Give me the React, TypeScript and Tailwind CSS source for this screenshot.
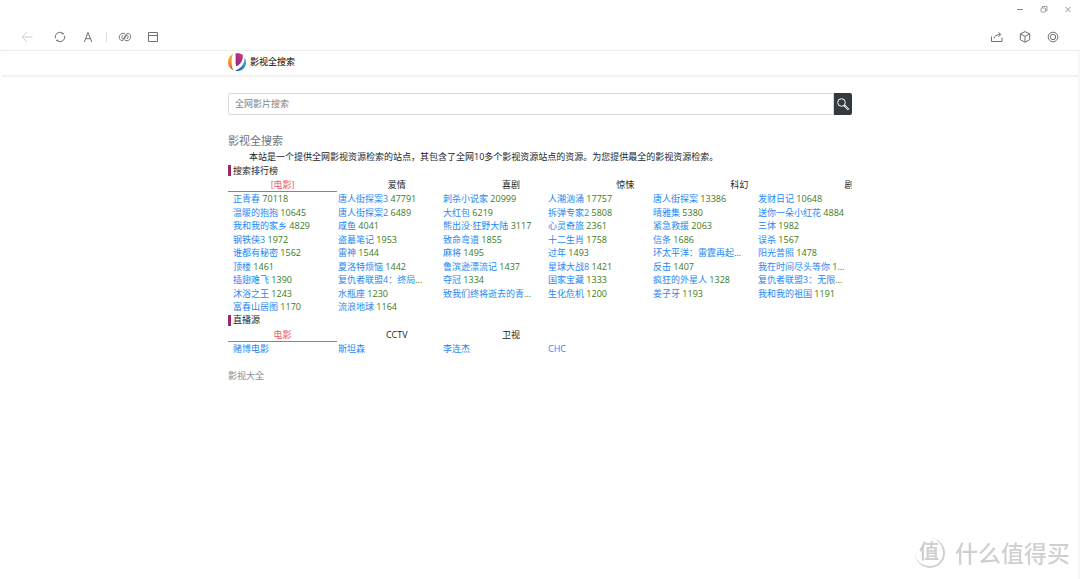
import React from "react";

type Film = [string, number];

const films: Film[] = [
  ["正青春", 70118], ["唐人街探案3", 47791], ["刺杀小说家", 20999], ["人潮汹涌", 17757], ["唐人街探案", 13386], ["发财日记", 10648],
  ["温暖的抱抱", 10645], ["唐人街探案2", 6489], ["大红包", 6219], ["拆弹专家2", 5808], ["晴雅集", 5380], ["送你一朵小红花", 4884],
  ["我和我的家乡", 4829], ["咸鱼", 4041], ["熊出没·狂野大陆", 3117], ["心灵奇旅", 2361], ["紧急救援", 2063], ["三体", 1982],
  ["钢铁侠3", 1972], ["盗墓笔记", 1953], ["致命弯道", 1855], ["十二生肖", 1758], ["信条", 1686], ["误杀", 1567],
  ["谁都有秘密", 1562], ["雷神", 1544], ["麻将", 1495], ["过年", 1493], ["环太平洋：雷霆再起", 1480], ["阳光普照", 1478],
  ["顶楼", 1461], ["夏洛特烦恼", 1442], ["鲁滨逊漂流记", 1437], ["星球大战8", 1421], ["反击", 1407], ["我在时间尽头等你", 1400],
  ["插翅难飞", 1390], ["复仇者联盟4：终局之战", 1380], ["夺冠", 1334], ["国家宝藏", 1333], ["疯狂的外星人", 1328], ["复仇者联盟3：无限战争", 1300],
  ["沐浴之王", 1243], ["水瓶座", 1230], ["致我们终将逝去的青春", 1210], ["生化危机", 1200], ["姜子牙", 1193], ["我和我的祖国", 1191],
  ["富春山居图", 1170], ["流浪地球", 1164],
];

const channels = ["赌博电影", "斯坦森", "李连杰", "CHC"];

function IconButton({ label, className = "", children }: { label: string; className?: string; children: React.ReactNode }) {
  return (
    <button type="button" aria-label={label} className={`flex items-center justify-center ${className}`}>
      {children}
    </button>
  );
}

function WindowBar() {
  return (
    <div className="flex h-5 items-center justify-end gap-3 pr-1.5 pb-0.5 text-[#888]">
      <IconButton label="最小化" className="size-3">
        <svg className="size-3" viewBox="0 0 12 12" fill="none" stroke="currentColor"><path d="M3 6.5h6" /></svg>
      </IconButton>
      <IconButton label="还原" className="size-3">
        <svg className="size-3" viewBox="0 0 12 12" fill="none" stroke="currentColor" strokeWidth=".8"><rect x="3" y="5" width="4.5" height="4" rx=".6" /><path d="M4.5 5V3.4H9v4.2H7.5" /></svg>
      </IconButton>
      <IconButton label="关闭" className="size-3">
        <svg className="size-3" viewBox="0 0 12 12" fill="none" stroke="currentColor" strokeWidth=".9"><path d="M3.5 4l5 5M8.5 4l-5 5" /></svg>
      </IconButton>
    </div>
  );
}

function Toolbar() {
  return (
    <div className="flex h-[31px] items-center justify-between border-b border-[#ececec] pt-1 pr-[19px] pl-5 text-[#707070]">
      <div className="flex items-center">
        <IconButton label="后退" className="size-4 text-[#d0d0d0]">
          <svg className="size-4" viewBox="0 0 16 16" fill="none" stroke="currentColor"><path d="M2 8h10.5M7 3L2 8l5 5" /></svg>
        </IconButton>
        <IconButton label="刷新" className="ml-4 size-4">
          <svg className="size-4" viewBox="0 0 16 16" fill="none" stroke="currentColor"><path d="M3.4 9.2A4.7 4.7 0 0 1 10.6 4.1M12.6 6.8A4.7 4.7 0 0 1 5.4 11.900" /><path d="M9.600 4.600h2.200M4.200 11.400h2.200" strokeWidth="1.400" /></svg>
        </IconButton>
        <IconButton label="字体" className="ml-3 size-4">
          <svg className="size-4" viewBox="0 0 16 16" fill="none" stroke="currentColor"><path d="M4.300 13L8 3.500 11.800 13M5.500 9.700h5" /></svg>
        </IconButton>
        <span className="ml-2.5 h-2.5 w-px bg-[#ddd]" />
        <IconButton label="链接" className="ml-2.5 size-4">
          <svg className="size-4" viewBox="0 0 16 16" fill="none" stroke="currentColor" strokeLinecap="round"><path d="M7.700 4.700C5.400 3.300 2.300 5.300 2.300 8.300c0 3.500 3.700 4.300 5.100 1.700l1.500-3c.6-1.100 1.900-1.100 2.200 0 .2.900-.3 1.600-.9 2.600" /><path d="M8.300 11.300c2.300 1.400 5.400-.6 5.400-3.600 0-3.500-3.700-4.300-5.100-1.700L7.100 9c-.6 1.100-1.900 1.100-2.200 0-.2-.9.300-1.600.9-2.600" /></svg>
        </IconButton>
        <IconButton label="窗口" className="ml-3 size-4">
          <svg className="size-4" viewBox="0 0 16 16" fill="none" stroke="currentColor"><path d="M3.5 3.5h9v9h-9zM3.5 6.5h9" /></svg>
        </IconButton>
      </div>
      <div className="flex items-center gap-3">
        <IconButton label="分享" className="size-4">
          <svg className="size-4" viewBox="0 0 16 16" fill="none" stroke="currentColor"><path d="M2.5 7.500v5h10.500v-4M5 9.500c.5-2.500 2.500-4 6.500-4M9.500 3.200l2.300 2.300-2.300 2.300" /></svg>
        </IconButton>
        <IconButton label="扩展" className="size-4">
          <svg className="size-4" viewBox="0 0 16 16" fill="none" stroke="currentColor"><path d="M8 2.600l4.700 2.300v5.800L8 13.200 3.300 10.700V4.900zM3.300 4.900L8 7.400l4.700-2.500M8 7.400v5.800" /></svg>
        </IconButton>
        <IconButton label="设置" className="size-4">
          <svg className="size-4" viewBox="0 0 16 16" fill="none" stroke="currentColor"><circle cx="8" cy="8" r="4.800" /><circle cx="8" cy="8" r="2.700" /></svg>
        </IconButton>
      </div>
    </div>
  );
}

function Logo() {
  return (
    <svg className="size-[18px]" viewBox="0 0 18 18" aria-hidden="true">
      <defs>
        <linearGradient id="warm" x1="0" y1="0" x2="0.4" y2="1"><stop offset="0" stopColor="#f8d024" /><stop offset="1" stopColor="#ea5a27" /></linearGradient>
        <linearGradient id="cool" x1="1" y1="0" x2="0" y2="1"><stop offset="0" stopColor="#37c3c4" /><stop offset="1" stopColor="#2358a5" /></linearGradient>
        <linearGradient id="pink" x1="1" y1="0" x2="0" y2="1"><stop offset="0" stopColor="#e0307c" /><stop offset="1" stopColor="#7d2c8c" /></linearGradient>
      </defs>
      <path d="M5 1C1.800 2.500 0 5.500 0 9c0 3.800 2.200 6.900 5.500 8.300C3.300 14 2.700 5.500 5 1z" fill="url(#warm)" />
      <path d="M7.500 .4c2.700-.6 5.300 0 7.400 1.600 .2 5.500-2.400 9.700-6.200 11.200C7 13 7.900 5 7.500 .4z" fill="url(#pink)" />
      <path d="M16.700 4.600c2.400 4.200 1.500 9-2 11.700-2.300 1.700-5.200 2.100-7.700 1.400C13 15.500 16.400 11 16.700 4.600z" fill="url(#cool)" />
    </svg>
  );
}

function SectionTitle({ children }: { children: React.ReactNode }) {
  return <h2 className="flex h-[13px] items-center gap-0.5 before:h-[11px] before:w-[3px] before:bg-[#9b2764]">{children}</h2>;
}

function Tabs({ items }: { items: string[] }) {
  return (
    <div role="tablist" className="flex gap-[5px] overflow-hidden">
      {items.map((t, i) => (
        <button
          key={t}
          type="button"
          role="tab"
          aria-selected={i === 0}
          className="h-[15px] w-[17.5%] shrink-0 leading-[13px] aria-selected:text-[#ef5568] aria-selected:shadow-[inset_0_-1px_0_#ef5568]"
        >
          {t}
        </button>
      ))}
    </div>
  );
}

function Watermark() {
  return (
    <div className="fixed right-2.5 bottom-2.5 flex items-center gap-2.5 text-[#d0d0d0]">
      <span className="flex size-[30px] items-center justify-center rounded-full border-r-2 border-b-2 border-[#d0d0d0] text-[20px] leading-none font-bold">值</span>
      <span className="text-[23px] leading-8 font-medium">什么值得买</span>
    </div>
  );
}

export default function App() {
  return (
    <div className="flex min-h-screen flex-col bg-white font-['Open_Sans','Noto_Sans_CJK_SC',sans-serif] text-[9px] leading-[1.5] text-[#212529]">
      <WindowBar />
      <Toolbar />
      <div className="flex-1 border-x-2 border-l-white border-r-[#f7f7f7]">
        <header className="h-[25px] border-b border-[#f0f0f0] shadow-[0_1px_1px_#f4f4f4]">
          <a href="#" className="mx-auto flex h-[22px] max-w-[624px] items-center gap-1 text-black">
            <Logo />
            影视全搜索
          </a>
        </header>
        <main className="mx-auto max-w-[624px] pt-[17px]">
          <form className="flex h-[22px]" onSubmit={(e) => e.preventDefault()}>
            <input
              aria-label="全网影片搜索"
              placeholder="全网影片搜索"
              className="min-w-0 flex-1 rounded-l-xs border border-[#d5dade] px-1.5 outline-none placeholder:text-[#7b838a]"
            />
            <button type="submit" aria-label="搜索" className="flex w-[18px] items-center justify-center rounded-r-xs bg-[#343a40]">
              <svg className="size-3.5" viewBox="0 0 14 14" fill="none" stroke="#fff"><circle cx="5.5" cy="5.5" r="3.8" /><path d="M8.200 8.200l4.400 4.400" strokeWidth="2" /><path d="M9 9l3.300 3.300" stroke="#343a40" strokeWidth=".6" /></svg>
            </button>
          </form>
          <h1 className="mt-4 text-[11px] leading-[19px] text-[#6c757d]">影视全搜索</h1>
          <p className="indent-[21px] leading-[14px]">本站是一个提供全网影视资源检索的站点，其包含了全网10多个影视资源站点的资源。为您提供最全的影视资源检索。</p>
          <SectionTitle>搜索排行榜</SectionTitle>
          <Tabs items={["[电影]", "爱情", "喜剧", "惊悚", "科幻", "剧情"]} />
          <ul className="-mr-1.5 grid grid-cols-6">
            {films.map(([name, count]) => (
              <li key={name} className="mr-2.5 truncate pl-[5px] text-[#3d7a14]">
                <a href="#" className="text-[#1e88f5]">{name}</a> {count}
              </li>
            ))}
          </ul>
          <SectionTitle>直播源</SectionTitle>
          <Tabs items={["电影", "CCTV", "卫视"]} />
          <ul className="-mr-1.5 grid grid-cols-6">
            {channels.map((c) => (
              <li key={c} className="truncate pl-[5px]"><a href="#" className="text-[#1e88f5]">{c}</a></li>
            ))}
          </ul>
          <footer className="mt-3.5 text-[#868e96]">影视大全</footer>
        </main>
      </div>
      <Watermark />
    </div>
  );
}
